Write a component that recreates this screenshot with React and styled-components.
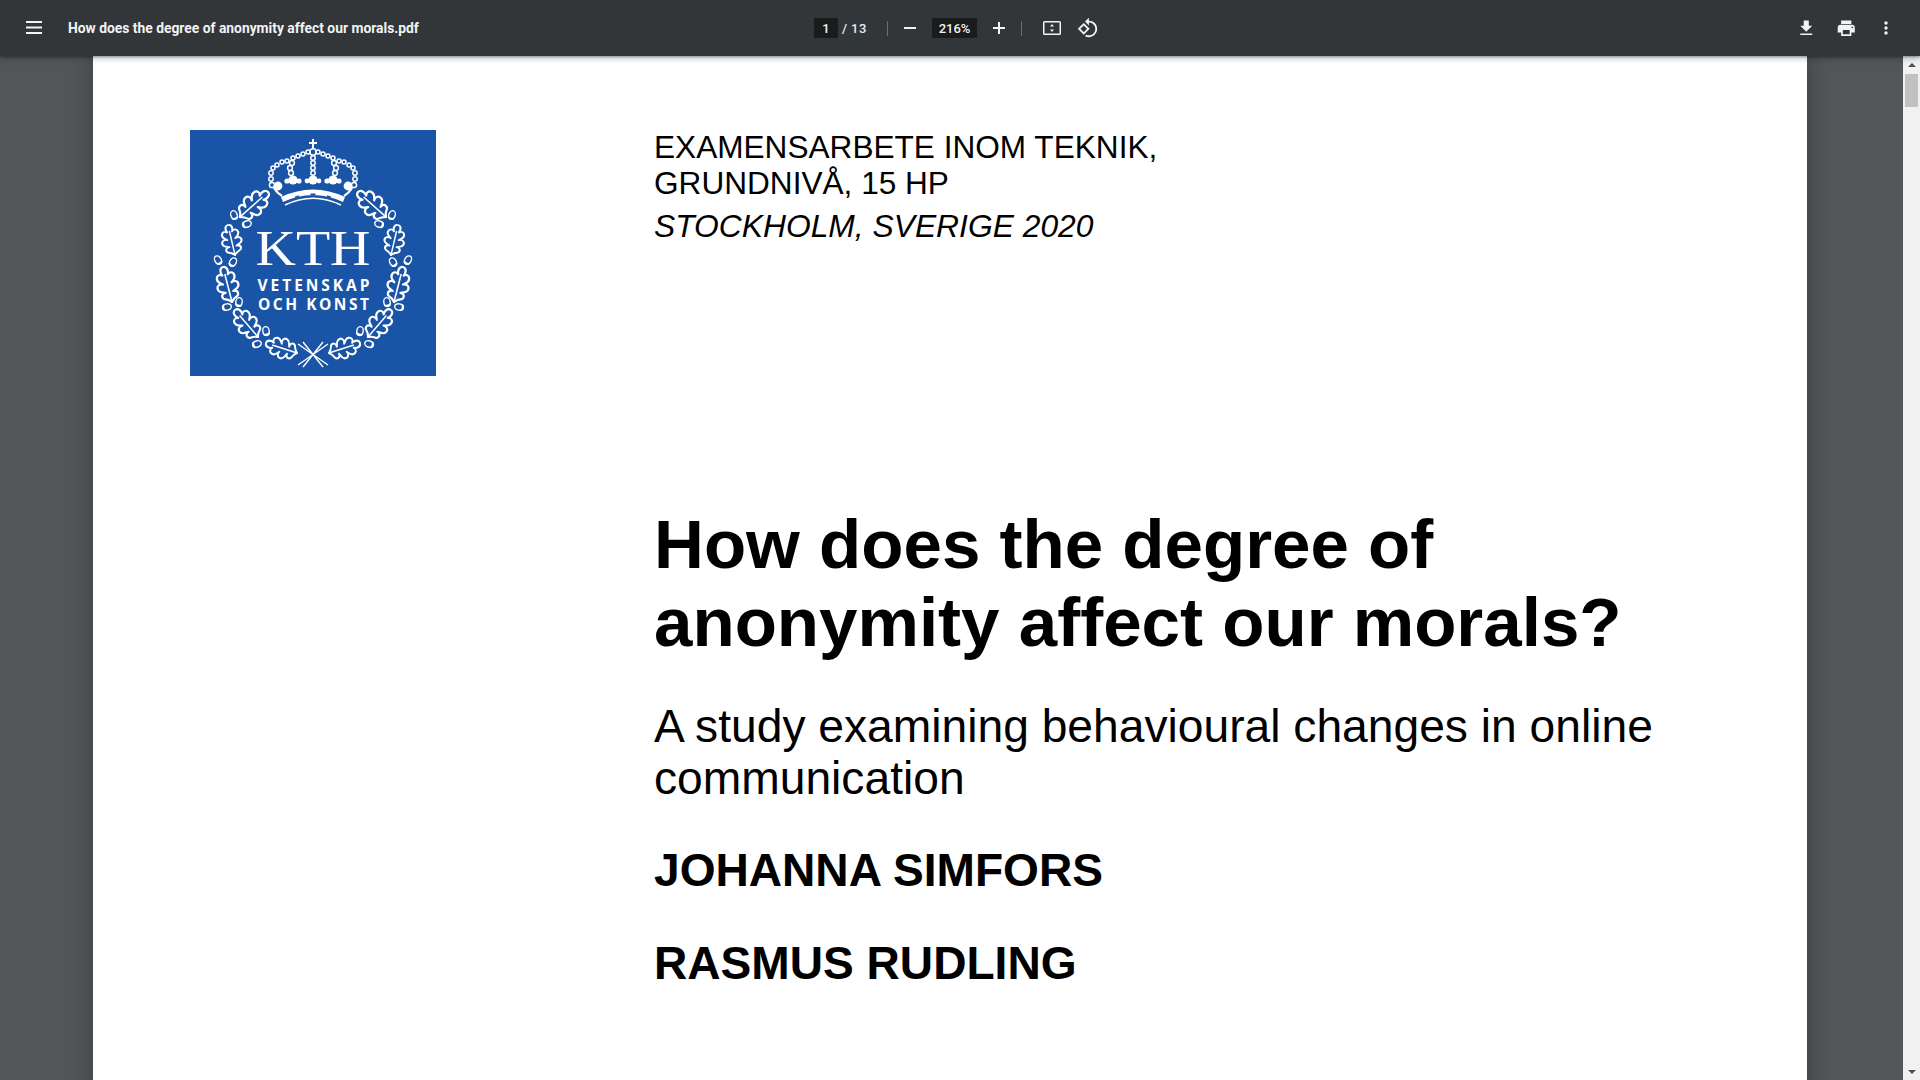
import React from "react";
import styled, { createGlobalStyle } from "styled-components";

const Global = createGlobalStyle`
  html, body { margin: 0; padding: 0; height: 100%; overflow: hidden; background: #525659; }
  #root { height: 100%; }
`;

const Shell = styled.div`
  display: flex;
  flex-direction: column;
  width: 1920px;
  height: 1080px;
  overflow: hidden;
`;

const Toolbar = styled.header`
  position: relative;
  z-index: 2;
  flex: 0 0 56px;
  display: grid;
  grid-template-columns: 1fr auto 1fr;
  align-items: center;
  background: #323639;
  color: #f1f3f4;
  font-family: Roboto, "Liberation Sans", sans-serif;
  box-shadow: 0 -1px 8px rgba(0, 0, 0, 0.09), 0 4px 8px rgba(0, 0, 0, 0.06), 0 1px 2px rgba(0, 0, 0, 0.3), 0 2px 6px rgba(0, 0, 0, 0.15);
`;

const LeftGroup = styled.div`
  display: flex;
  align-items: center;
  padding-left: 26px;
`;

const Title = styled.span`
  margin-left: 26px;
  font-size: 13.85px;
  font-weight: 700;
  white-space: nowrap;
`;

const CenterGroup = styled.div`
  display: flex;
  align-items: center;
  margin-left: -7px;
  font-size: 13px;
  font-weight: 500;
`;

const RightGroup = styled.div`
  display: flex;
  align-items: center;
  justify-content: flex-end;
  padding-right: 24px;
`;

const NumBox = styled.span`
  display: flex;
  align-items: center;
  justify-content: center;
  width: ${(p) => p.$w}px;
  height: 20px;
  margin-left: ${(p) => p.$ml || 0}px;
  background: #191b1c;
  color: #f1f3f4;
`;

const PageCount = styled.span`
  margin-left: 4px;
  width: 33px;
  white-space: pre;
  letter-spacing: 0.4px;
  color: #e8eaed;
`;

const Sep = styled.span`
  width: 1px;
  height: 15px;
  background: #6a6e71;
  margin: ${(p) => p.$m};
`;

const IconSlot = styled.svg`
  display: block;
  flex: none;
  fill: #f1f3f4;
  margin: ${(p) => p.$m || 0};
`;

const Viewer = styled.main`
  flex: 1;
  display: flex;
  min-height: 0;
`;

const ScrollArea = styled.div`
  flex: 1;
  min-width: 0;
  overflow: hidden;
  background: #525659;
  padding-left: 93px;
`;

const Sheet = styled.article`
  width: 1714px;
  height: 1400px;
  background: #fff;
  box-shadow: 0 0 20px rgba(0, 0, 0, 0.3);
  display: grid;
  grid-template-columns: 464px 1fr;
  font-family: "Liberation Sans", Arial, sans-serif;
  color: #000;
  padding: 74px 0 0 97px;
  box-sizing: border-box;
`;

const LogoSvg = styled.svg`
  display: block;
  width: 246px;
  height: 246px;
`;

const TextCol = styled.div`
  display: flex;
  flex-direction: column;
`;

const Kicker = styled.div`
  font-size: 31.6px;
  line-height: 35.5px;
`;

const Place = styled.div`
  font-size: 31.8px;
  font-style: italic;
  line-height: 36px;
  margin-top: 7px;
`;

const Heading = styled.h1`
  margin: 261px 0 0;
  font-size: 69.1px;
  line-height: 78px;
  font-weight: 700;
`;

const Sub = styled.p`
  margin: 39px 0 0;
  font-size: 46.2px;
  line-height: 52px;
  font-weight: 400;
`;

const Author = styled.p`
  margin: ${(p) => p.$mt}px 0 0;
  font-size: 46.1px;
  line-height: 52px;
  font-weight: 700;
`;

const ScrollBar = styled.aside`
  flex: 0 0 17px;
  display: flex;
  flex-direction: column;
  align-items: center;
  background: #f1f1f1;
  padding-top: 7px;
  box-sizing: border-box;
`;

const Thumb = styled.div`
  width: 13px;
  height: 33px;
  background: #c1c1c1;
`;

const Spacer = styled.div`
  flex: 1;
`;

const ArrowUp = styled.div`
  width: 0;
  height: 0;
  border-left: 4px solid transparent;
  border-right: 4px solid transparent;
  border-bottom: 4px solid #505050;
  margin-bottom: 7px;
`;

const ArrowDown = styled.div`
  width: 0;
  height: 0;
  border-left: 4px solid transparent;
  border-right: 4px solid transparent;
  border-top: 4px solid #505050;
  margin-bottom: 6px;
`;

const LEAF =
  "M0 0 C1 -1 3 -2 4 -5 C5 -8 9 -8 10 -5 L10 -3.5 C11 -4 11 -9 15 -9.5 C19 -10 20 -6 18.5 -4 C20 -5 21 -8.5 25 -8 C29 -7.5 29 -4 27 -2.5 C30 -4 35 -3.5 35 0 C35 3.5 30 4 27 2.5 C29 4 29 7.5 25 8 C21 8.5 20 5 18.5 4 C20 6 19 10 15 9.5 C11 9 11 4 10 3.5 L10 5 C9 8 5 8 4 5 C3 2 1 1 0 0 Z";

const leaves = [
  [50, 87, 78, 62],
  [45, 125, 38, 95],
  [42, 172, 33, 137],
  [68, 207, 45, 180],
  [107, 223, 76, 213],
];

const leafTransform = ([x0, y0, x1, y1]) => {
  const dx = x1 - x0;
  const dy = y1 - y0;
  const s = Math.hypot(dx, dy) / 35;
  const r = (Math.atan2(dy, dx) * 180) / Math.PI;
  return `translate(${x0} ${y0}) rotate(${r}) scale(${s} ${(s + 1) / 2 * 1.1})`;
};

const acorns = [
  [44, 85, -20],
  [57, 94, 70],
  [28, 130, -30],
  [43, 132, 30],
  [49, 172, 10],
  [37, 177, 80],
  [76, 201, -10],
  [67, 214, 70],
];

const beads = [
  [118, 22, 2],
  [113, 24, 2],
  [108, 26, 2],
  [103, 28, 2],
  [97, 31, 2],
  [92, 32, 2],
  [87, 35, 2],
  [83, 38, 2],
  [81, 43, 2.2],
  [81, 49, 2.2],
  [102, 33, 2.4],
  [100, 38, 2.4],
  [101, 43, 2.4],
];

const beadsCenter = [
  [123, 22, 3.2],
  [123, 28, 2.2],
  [123, 33, 2.2],
  [123, 38, 2.2],
  [123, 43, 2.2],
];

const Half = () => (
  <g>
    {leaves.map((l, i) => (
      <g key={i} transform={leafTransform(l)}>
        <path d={LEAF} fill="none" stroke="#fff" strokeWidth="2" strokeLinejoin="round" />
        <path d="M-1 0 L28 0" stroke="#fff" strokeWidth="1.4" />
      </g>
    ))}
    {acorns.map(([x, y, r], i) => (
      <g key={i} transform={`translate(${x} ${y}) rotate(${r})`}>
        <ellipse cx="0" cy="0" rx="3.2" ry="4.4" fill="none" stroke="#fff" strokeWidth="1.4" />
        <path d="M-3.8 1 Q0 4.6 3.8 1 L3 4 Q0 6.4 -3 4 Z" fill="#fff" />
      </g>
    ))}
    {beads.map(([x, y, r], i) => (
      <circle key={i} cx={x} cy={y} r={r} fill="none" stroke="#fff" strokeWidth="1.5" />
    ))}
    <circle cx="103" cy="50" r="4.6" fill="#fff" />
    <circle cx="97" cy="51" r="2.6" fill="#fff" />
    <circle cx="109" cy="51" r="2.6" fill="#fff" />
    <circle cx="88" cy="56" r="4.4" fill="#fff" />
    <circle cx="82" cy="55" r="2.6" fill="none" stroke="#fff" strokeWidth="1.5" />
    <path d="M84 58 Q87 63 92 66" fill="none" stroke="#fff" strokeWidth="2.4" />
  </g>
);

const Logo = () => (
  <LogoSvg viewBox="0 0 246 246" role="img" aria-label="KTH logo">
    <rect width="246" height="246" fill="#1954a6" />
    <Half />
    <g transform="translate(246 0) scale(-1 1)">
      <Half />
    </g>
    <path d="M122 9 h2 v3 h3 v2 h-3 v5 h-2 v-5 h-3 v-2 h3 Z" fill="#fff" />
    {beadsCenter.map(([x, y, r], i) => (
      <circle key={i} cx={x} cy={y} r={r} fill="none" stroke="#fff" strokeWidth="1.5" />
    ))}
    <circle cx="123" cy="50" r="4.6" fill="#fff" />
    <circle cx="117" cy="51" r="2.4" fill="#fff" />
    <circle cx="129" cy="51" r="2.4" fill="#fff" />
    <path d="M91 67 Q123 52 155 67 L153 72 Q123 58 93 72 Z" fill="#fff" />
    <path d="M95 75 Q123 61.5 151 75" fill="none" stroke="#fff" strokeWidth="1.7" />
    <path d="M120.5 63.5 h5 v1.5 h-5z M105 66.5 l4 -1.3 v1.5 l-4 1.3z M141 66.5 l-4 -1.3 v1.5 l4 1.3z" fill="#1954a6" />
    <text
      x="123"
      y="135"
      textAnchor="middle"
      fontFamily='"Liberation Serif", serif'
      fontSize="50"
      textLength="115"
      lengthAdjust="spacingAndGlyphs"
      fill="#fff"
    >
      KTH
    </text>
    <text
      x="123.5"
      y="161"
      textAnchor="middle"
      fontFamily='"Open Sans", sans-serif'
      fontWeight="700"
      fontSize="15.5"
      textLength="112"
      fill="#fff"
    >
      VETENSKAP
    </text>
    <text
      x="123.5"
      y="180"
      textAnchor="middle"
      fontFamily='"Open Sans", sans-serif'
      fontWeight="700"
      fontSize="15.5"
      textLength="111"
      fill="#fff"
    >
      OCH KONST
    </text>
    <path d="M108 214 L138 235 M138 214 L108 235 M113 212 L133 237 M133 212 L113 237" stroke="#fff" strokeWidth="1.4" fill="none" />
  </LogoSvg>
);

const Icon = ({ size, children, box = "0 0 24 24", m }) => (
  <IconSlot width={size} height={size} viewBox={box} $m={m}>
    {children}
  </IconSlot>
);

export default function App() {
  return (
    <Shell>
      <Global />
      <Toolbar>
        <LeftGroup>
          <Icon size={16} box="0 0 16 16">
            <path d="M0 1h16v2H0zM0 6.5h16v2H0zM0 12h16v2H0z" />
          </Icon>
          <Title>How does the degree of anonymity affect our morals.pdf</Title>
        </LeftGroup>
        <CenterGroup>
          <NumBox $w={24}>1</NumBox>
          <PageCount>{"/ 13"}</PageCount>
          <Sep $m="0 16px 0 12px" />
          <Icon size={12} box="0 0 12 12">
            <path d="M0 5h12v2H0z" />
          </Icon>
          <NumBox $w={45} $ml={16}>216%</NumBox>
          <Icon size={12} box="0 0 12 12" m="0 0 0 16px">
            <path d="M0 5h12v2H0zM5 0h2v12H5z" />
          </Icon>
          <Sep $m="0 21px 0 16px" />
          <Icon size={18} box="0 0 18 14">
            <path d="M1.5 0h15A1.5 1.5 0 0 1 18 1.5v11a1.5 1.5 0 0 1-1.5 1.5h-15A1.5 1.5 0 0 1 0 12.5v-11A1.5 1.5 0 0 1 1.5 0zm0 1.5v11h15v-11zM9 3l2 2.5H7zM9 11l-2-2.5h4z" fillRule="evenodd" />
          </Icon>
          <Icon size={22} m="0 0 0 16px">
            <path d="M7.34 6.41L.86 12.9l6.49 6.48 6.49-6.48-6.5-6.49zM3.69 12.9l3.66-3.66L11 12.9l-3.66 3.66-3.65-3.66zm15.67-6.26C17.61 4.88 15.3 4 13 4V.76L8.76 5 13 9.24V6c1.79 0 3.58.68 4.95 2.05 2.73 2.73 2.73 7.17 0 9.9C16.58 19.32 14.79 20 13 20c-.97 0-1.94-.21-2.84-.61l-1.49 1.49C10.02 21.62 11.51 22 13 22c2.3 0 4.61-.88 6.36-2.64 3.52-3.51 3.52-9.21 0-12.72z" />
          </Icon>
        </CenterGroup>
        <RightGroup>
          <Icon size={20.5}>
            <path d="M19 9h-4V3H9v6H5l7 7 7-7zM5 18v2h14v-2H5z" />
          </Icon>
          <Icon size={20.5} m="0 0 0 19px">
            <path d="M19 8H5c-1.66 0-3 1.34-3 3v6h4v4h12v-4h4v-6c0-1.66-1.34-3-3-3zm-3 11H8v-5h8v5zm3-7c-.55 0-1-.45-1-1s.45-1 1-1 1 .45 1 1-.45 1-1 1zm-1-9H6v4h12V3z" />
          </Icon>
          <Icon size={20} m="0 0 0 20px">
            <path d="M12 8c1.1 0 2-.9 2-2s-.9-2-2-2-2 .9-2 2 .9 2 2 2zm0 2c-1.1 0-2 .9-2 2s.9 2 2 2 2-.9 2-2-.9-2-2-2zm0 6c-1.1 0-2 .9-2 2s.9 2 2 2 2-.9 2-2-.9-2-2-2z" />
          </Icon>
        </RightGroup>
      </Toolbar>
      <Viewer>
        <ScrollArea>
          <Sheet>
            <Logo />
            <TextCol>
              <Kicker>
                EXAMENSARBETE INOM TEKNIK,
                <br />
                GRUNDNIVÅ, 15 HP
              </Kicker>
              <Place>STOCKHOLM, SVERIGE 2020</Place>
              <Heading>
                How does the degree of
                <br />
                anonymity affect our morals?
              </Heading>
              <Sub>
                A study examining behavioural changes in online
                <br />
                communication
              </Sub>
              <Author $mt={40}>JOHANNA SIMFORS</Author>
              <Author $mt={41}>RASMUS RUDLING</Author>
            </TextCol>
          </Sheet>
        </ScrollArea>
        <ScrollBar>
          <ArrowUp />
          <Thumb />
          <Spacer />
          <ArrowDown />
        </ScrollBar>
      </Viewer>
    </Shell>
  );
}
